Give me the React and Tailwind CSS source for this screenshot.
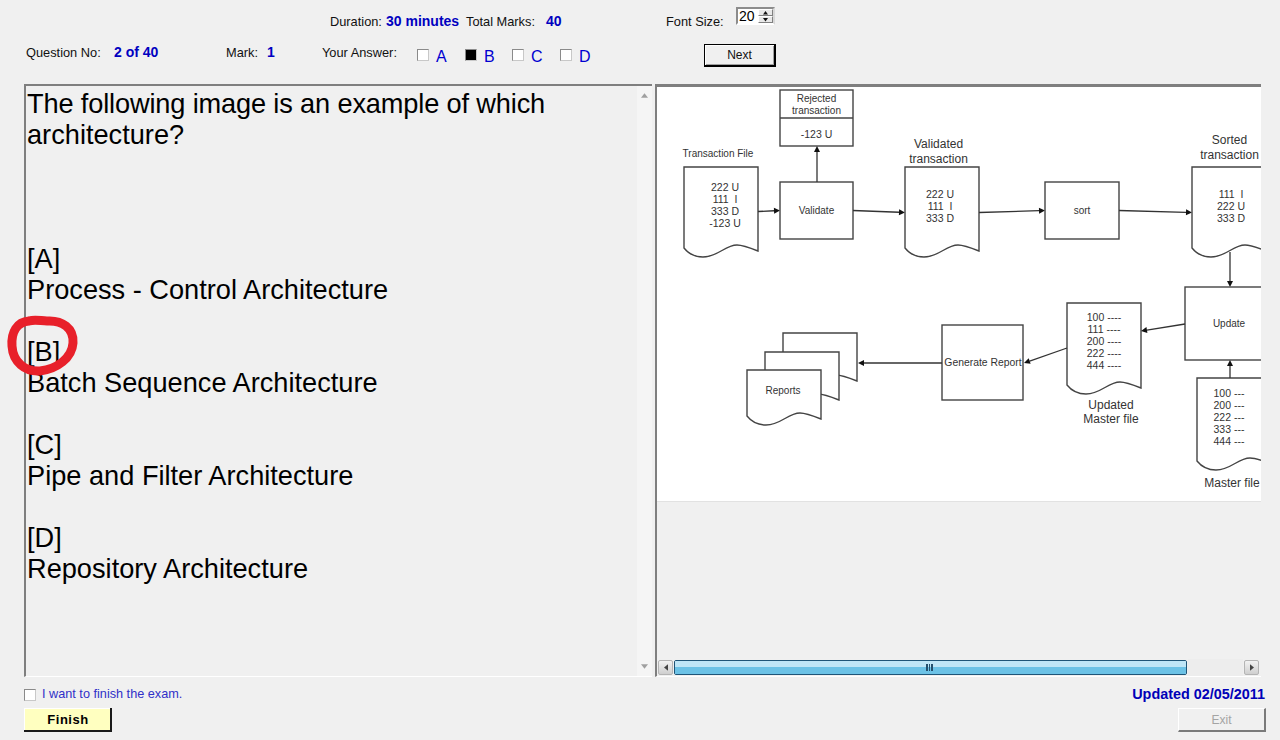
const FONT = { fontFamily: '"Liberation Sans", Arial, sans-serif' };

function Doc({ x, y, w = 74, h = 81, up = 3 }) {
  const b = y + h;
  return (
    <path
      d={`M${x} ${y} H${x + w} V${b + up} C${x + w - 10} ${b - 1} ${x + w - 16} ${b - 3} ${x + w - 21} ${b - 3} C${x + w - 33} ${b - 3} ${x + w - 40} ${b + 9} ${x + w - 55} ${b + 9} C${x + w - 63} ${b + 9} ${x + w - 70} ${b + 5} ${x} ${b} Z`}
      fill="#fff"
      stroke="#444"
      strokeWidth="1.4"
    />
  );
}

function Lines({ x, y, size = 10.5, step = 12, items }) {
  return items.map((t, i) => (
    <text key={i} x={x} y={y + i * step} fontSize={size} textAnchor="middle" fill="#333">
      {t}
    </text>
  ));
}

function Arrow({ x1, y1, x2, y2 }) {
  const a = Math.atan2(y2 - y1, x2 - x1);
  const l = 6;
  const s = 3;
  const bx = x2 - l * Math.cos(a);
  const by = y2 - l * Math.sin(a);
  const px = -Math.sin(a) * s;
  const py = Math.cos(a) * s;
  return (
    <g>
      <line x1={x1} y1={y1} x2={bx} y2={by} stroke="#333" strokeWidth="1.3" />
      <polygon points={`${x2},${y2} ${bx + px},${by + py} ${bx - px},${by - py}`} fill="#111" />
    </g>
  );
}

function Box({ x, y, w, h }) {
  return <rect x={x} y={y} width={w} height={h} fill="#fff" stroke="#444" strokeWidth="1.4" />;
}

function Diagram() {
  return (
    <svg viewBox="657 87 604 414" width="604" height="414" className="block" style={FONT}>
      <rect x="657" y="87" width="604" height="414" fill="#fff" />
      <Box x={780} y={90} w={73} h={56} />
      <line x1="780" y1="118" x2="853" y2="118" stroke="#444" strokeWidth="1.3" />
      <Lines x={816.5} y={101.5} size={10} step={12} items={["Rejected", "transaction"]} />
      <Lines x={816.5} y={138} size={10.5} items={["-123 U"]} />

      <text x="718" y="157" fontSize="10" textAnchor="middle" fill="#333">Transaction File</text>
      <Doc x={684} y={167} />
      <Lines x={725} y={191} items={["222 U", "111\u00a0\u00a0I", "333 D", "-123 U"]} />
      <Arrow x1={758} y1={211.5} x2={780} y2={210.5} />
      <Box x={780} y={182} w={73} h={57} />
      <text x="816.5" y="214" fontSize="10" textAnchor="middle" fill="#333">Validate</text>
      <Arrow x1={817} y1={182} x2={817} y2={146} />
      <Arrow x1={853} y1={210.5} x2={905} y2={212.5} />

      <Lines x={938.5} y={148} size={12} step={15} items={["Validated", "transaction"]} />
      <Doc x={905} y={167} />
      <Lines x={940} y={198} items={["222 U", "111\u00a0\u00a0I", "333 D"]} />
      <Arrow x1={979} y1={212.5} x2={1045} y2={210.5} />
      <Box x={1045} y={182} w={74} h={57} />
      <text x="1082" y="214" fontSize="10" textAnchor="middle" fill="#333">sort</text>
      <Arrow x1={1119} y1={210.5} x2={1192} y2={212.5} />

      <Lines x={1229.5} y={144} size={12} step={15} items={["Sorted", "transaction"]} />
      <Doc x={1192} y={167} />
      <Lines x={1231} y={198} items={["111\u00a0\u00a0I", "222 U", "333 D"]} />
      <Arrow x1={1230} y1={252} x2={1230} y2={287} />

      <Box x={1185} y={287} w={90} h={73} />
      <text x="1229" y="327" fontSize="10" textAnchor="middle" fill="#333">Update</text>
      <Doc x={1197} y={378} h={83} />
      <Arrow x1={1230} y1={378} x2={1230} y2={360} />
      <Lines x={1229} y={397} items={["100 ---", "200 ---", "222 ---", "333 ---", "444 ---"]} />
      <text x="1232" y="487" fontSize="12" textAnchor="middle" fill="#333">Master file</text>

      <Doc x={1067} y={303} h={82} />
      <Lines x={1104} y={321} items={["100 ----", "111 ----", "200 ----", "222 ----", "444 ----"]} />
      <Arrow x1={1185} y1={324} x2={1141} y2={331} />
      <Lines x={1111} y={409} size={12} step={14} items={["Updated", "Master file"]} />

      <Arrow x1={1067} y1={348} x2={1024} y2={363} />
      <Box x={942} y={325} w={81} h={75} />
      <text x="983" y="366" fontSize="10.4" textAnchor="middle" fill="#333">Generate Report</text>
      <Arrow x1={942} y1={363} x2={858} y2={363} />

      <Doc x={783} y={333} h={45} />
      <Doc x={765} y={352} h={45} />
      <Doc x={747} y={370} h={46} />
      <text x="783" y="394" fontSize="10" textAnchor="middle" fill="#333">Reports</text>
    </svg>
  );
}

function CheckBox({ filled }) {
  return (
    <span className="flex h-[12px] w-[12px] shrink-0 items-center justify-center border border-t-[#8a8a8a] border-l-[#8a8a8a] border-r-[#c8c8c8] border-b-[#c8c8c8] bg-white">
      {filled && <span className="block h-[10px] w-[10px] bg-black" />}
    </span>
  );
}

function Answer({ letter, filled, className }) {
  return (
    <div className={`flex items-start gap-[7px] ${className}`}>
      <CheckBox filled={filled} />
      <span className="text-[16px] leading-none text-[#0000d0] font-medium">{letter}</span>
    </div>
  );
}

function Spinner() {
  return (
    <div className="flex h-[18px] w-[39px] border-2 border-t-[#8c8c8c] border-l-[#8c8c8c] border-r-[#d8d8d8] border-b-white bg-white">
      <span className="flex-1 pl-[1px] text-[14px] leading-[15px] text-black">20</span>
      <div className="flex w-[15px] flex-col">
        {["M0 3.5 L2.5 0 L5 3.5Z", "M0 0 L2.5 3.5 L5 0Z"].map((d) => (
          <span
            key={d}
            className="flex flex-1 items-center justify-center border border-t-white border-l-white border-r-[#808080] border-b-[#808080] bg-[#e8e8e8]"
          >
            <svg width="5" height="4" viewBox="0 0 5 4">
              <path d={d} fill="#111" />
            </svg>
          </span>
        ))}
      </div>
    </div>
  );
}

function ScrollArrow({ d }) {
  return (
    <svg width="7" height="5" viewBox="0 0 9 6">
      <path d={d} fill="#a0a0a0" />
    </svg>
  );
}

function HButton({ d }) {
  return (
    <div className="flex h-[15px] w-[15px] shrink-0 items-center justify-center rounded-[2px] border border-[#b4b4b4] bg-gradient-to-b from-[#f2f2f2] to-[#cfcfcf]">
      <svg width="4" height="7" viewBox="0 0 5 8">
        <path d={d} fill="#444" />
      </svg>
    </div>
  );
}

const LEFT_TEXT = [
  "architecture?",
  "",
  "",
  "",
  "[A]",
  "Process - Control Architecture",
  "",
  "[B]",
  "Batch Sequence Architecture",
  "",
  "[C]",
  "Pipe and Filter Architecture",
  "",
  "[D]",
  "Repository Architecture",
];

export default function App() {
  return (
    <div className="relative flex h-[740px] w-[1280px] flex-col overflow-hidden bg-[#f0f0f0] text-[#111]" style={FONT}>
      <div className="flex h-[40px] items-start pt-[7px] text-[12.8px]">
        <span className="ml-[330px] mt-[5px] w-[56px]">Duration:</span>
        <span className="mt-[4px] w-[80px] text-[14px] font-bold text-[#0000c0]">30 minutes</span>
        <span className="mt-[5px] w-[80px]">Total Marks:</span>
        <span className="mt-[4px] w-[120px] text-[14px] font-bold text-[#0000c0]">40</span>
        <span className="mt-[5px] w-[70px]">Font Size:</span>
        <Spinner />
      </div>

      <div className="flex h-[44px] items-start text-[12.8px]">
        <span className="ml-[26px] mt-[3px] w-[88px]">Question No:</span>
        <span className="mt-[2px] w-[112px] text-[14px] font-bold text-[#0000c0]">2 of 40</span>
        <span className="mt-[3px] w-[41px]">Mark:</span>
        <span className="mt-[2px] w-[55px] text-[14px] font-bold text-[#0000c0]">1</span>
        <span className="mt-[3px] w-[95px]">Your Answer:</span>
        <Answer letter="A" className="mt-[9px] w-[48px]" />
        <Answer letter="B" filled className="mt-[9px] w-[47px]" />
        <Answer letter="C" className="mt-[9px] w-[48px]" />
        <Answer letter="D" className="mt-[9px] w-[144px]" />
        <button className="mt-[4px] h-[23px] w-[72px] border border-black border-b-2 border-r-2 bg-[#f0f0f0] text-[12px] text-[#111] shadow-[inset_1px_1px_0_#fff,inset_-1px_-1px_0_#a0a0a0]">
          Next
        </button>
      </div>

      <div className="flex h-[593px] items-stretch pl-[24px]">
        <div className="flex w-[628px] border-t-2 border-l-2 border-t-[#7f7f7f] border-l-[#7f7f7f] border-b border-b-white">
          <div className="min-w-0 flex-1 pl-[1px] pt-[2px] text-[27.2px] leading-[31px] text-black">
            <div className="h-[31px] whitespace-pre tracking-[-0.15px]">The following image is an example of which</div>
            {LEFT_TEXT.map((t, i) => (
              <div key={i} className="h-[31px] whitespace-pre">{t}</div>
            ))}
          </div>
          <div className="flex w-[15px] shrink-0 flex-col items-center justify-between bg-[#f5f5f5] py-[7px]">
            <ScrollArrow d="M0 6 L4.5 0 L9 6Z" />
            <ScrollArrow d="M0 0 L4.5 6 L9 0Z" />
          </div>
        </div>

        <div className="ml-[3px] flex w-[606px] flex-col border-t-[3px] border-l-2 border-t-[#7f7f7f] border-l-[#7f7f7f] border-b border-b-white">
          <Diagram />
          <div className="flex-1 border-t border-[#e2e2e2]" />
          <div className="flex h-[17px] items-center gap-[1px] bg-[#f0f0f0] pl-[1px] pr-[2px]">
            <HButton d="M5 0 L0 4 L5 8Z" />
            <div className="relative flex h-[15px] w-[513px] flex-col overflow-hidden rounded-[2px] border border-[#1f5578]">
              <div className="h-[6px] bg-[#bfe6f7]" />
              <div className="flex-1 bg-[#6cc2e6]" />
              <div className="absolute left-[251px] top-[3px] flex gap-[1px]">
                <span className="h-[7px] w-[1.5px] bg-[#24506e]" />
                <span className="h-[7px] w-[1.5px] bg-[#24506e]" />
                <span className="h-[7px] w-[1.5px] bg-[#24506e]" />
              </div>
            </div>
            <div className="flex-1 bg-[#ededed] self-stretch" />
            <HButton d="M0 0 L5 4 L0 8Z" />
          </div>
        </div>
      </div>

      <div className="flex flex-1 flex-col px-[24px] pr-[14px] pt-[8px]">
        <div className="flex h-[19px] items-center">
          <CheckBox />
          <span className="ml-[6px] flex-1 pt-[1px] text-[12.7px] text-[#3030c8]">I want to finish the exam.</span>
          <span className="mr-[1px] text-[14.4px] font-bold text-[#0000b8]">Updated 02/05/2011</span>
        </div>
        <div className="mt-[4px] flex items-start justify-between">
          <button className="h-[24px] w-[88px] border-b-2 border-r-2 border-[#1a1a1a] bg-[#ffffc0] pl-[2px] pt-[1px] text-[13px] font-bold tracking-[0.5px] text-black shadow-[inset_1px_1px_0_#fff]">
            Finish
          </button>
          <button className="h-[24px] w-[88px] border-b-2 border-r-2 border-[#7a7a7a] border-t border-l border-t-white border-l-white bg-[#f0f0f0] text-[12px] text-[#a4a4a4]">
            Exit
          </button>
        </div>
      </div>

      <svg className="absolute left-[5px] top-[313px]" width="76" height="66" viewBox="0 0 76 66">
        <path
          d="M24 8 C12 9 6 19 7 33 C8 49 20 59 35 58 C52 56 67 45 68 30 C69 15 57 7 42 8 C36 8 30 6 24 8 Z"
          fill="none"
          stroke="#e8202a"
          strokeWidth="9"
          strokeLinejoin="round"
        />
      </svg>
    </div>
  );
}
